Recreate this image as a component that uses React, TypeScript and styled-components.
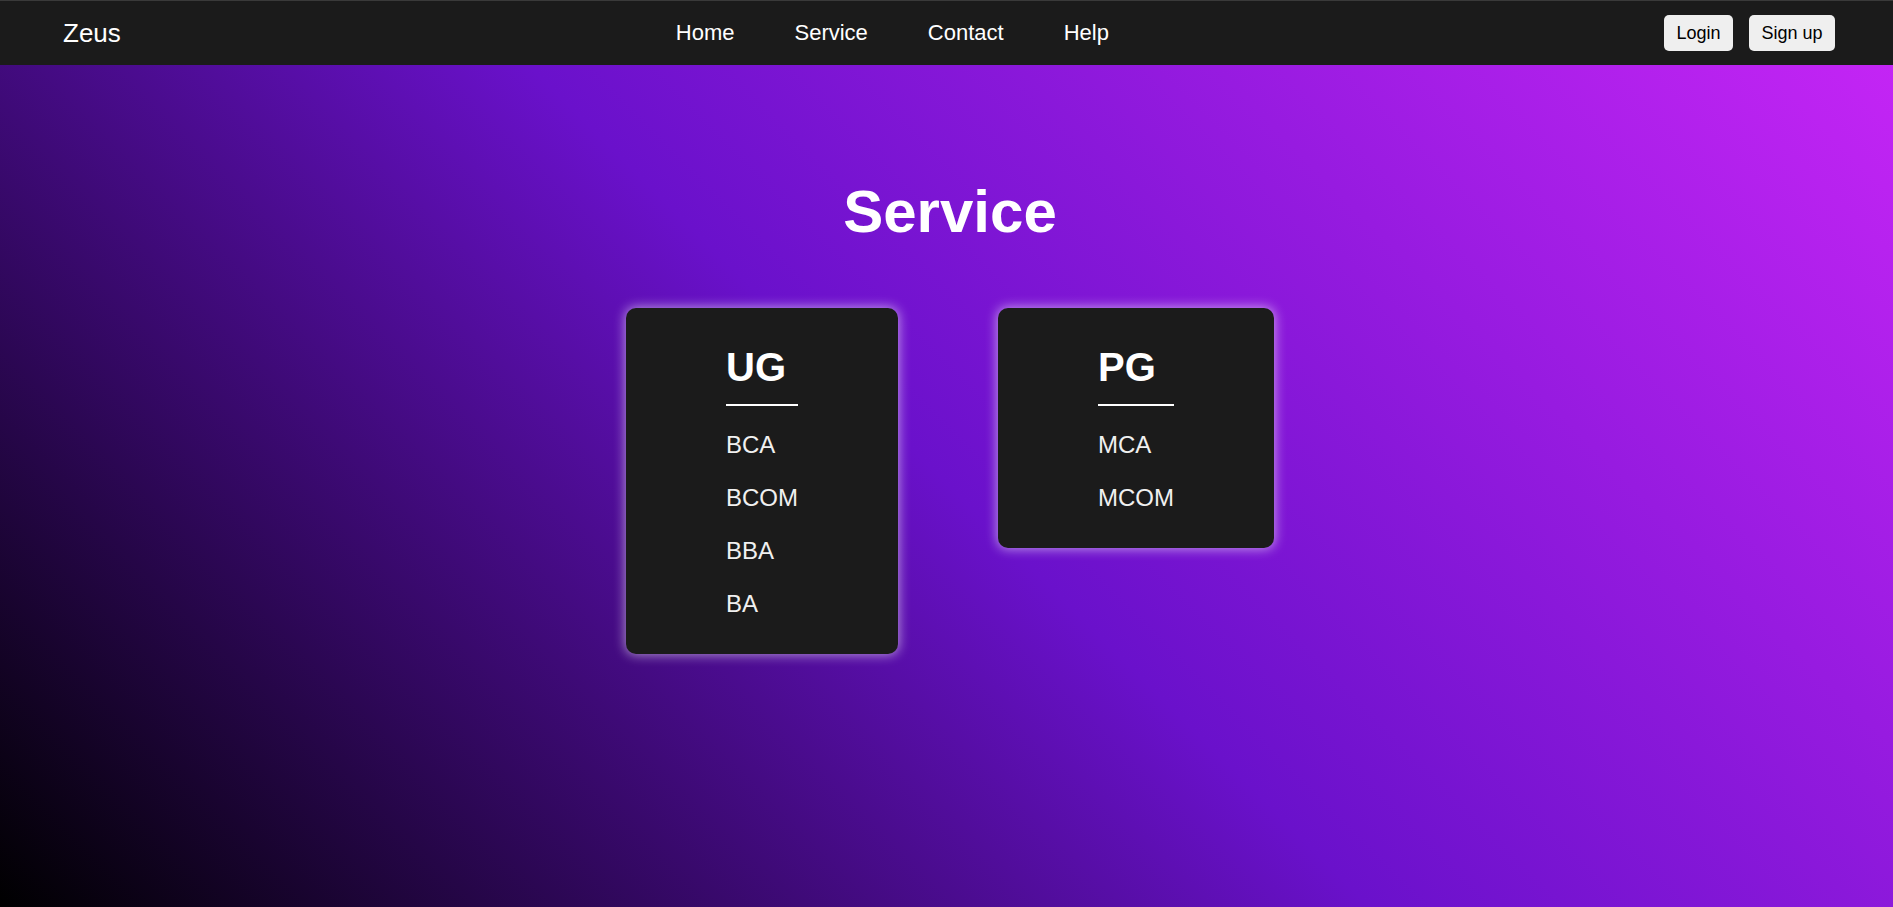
import React from "react";
import styled, { createGlobalStyle } from "styled-components";

const GlobalStyle = createGlobalStyle`
  html, body {
    margin: 0;
    padding: 0;
    overflow: hidden;
    background: #000;
  }
  body {
    font-family: "Liberation Sans", Arial, Helvetica, sans-serif;
  }
  * { box-sizing: border-box; }
`;

const Page = styled.div`
  width: 1900px;
  min-height: 100vh;
  display: flex;
  flex-direction: column;
`;

const NavBar = styled.header`
  height: 65px;
  border-top: 1px solid #3a3a3a;
  background: #1b1b1b;
  display: flex;
  align-items: center;
  justify-content: space-between;
  padding: 0 65px 0 63px;
`;

const Logo = styled.div`
  color: #ffffff;
  font-size: 26px;
`;

const NavLinks = styled.ul`
  display: flex;
  gap: 60px;
  list-style: none;
  margin: 0;
  padding: 0;
`;

const NavLink = styled.li`
  color: #ffffff;
  font-size: 22px;
`;

const AuthGroup = styled.div`
  display: flex;
  gap: 16px;
`;

const AuthButton = styled.button`
  height: 36px;
  padding: 0 12.5px;
  border: none;
  border-radius: 5px;
  background: #efefef;
  color: #000;
  font-family: inherit;
  font-size: 18px;
`;

const Hero = styled.main`
  flex: 1;
  background: linear-gradient(45deg, #000000, #6a11cb, #c425f5);
  display: flex;
  flex-direction: column;
  align-items: center;
  padding-top: 112px;
`;

const Title = styled.h1`
  margin: 0 0 62px;
  color: #ffffff;
  font-size: 60px;
  font-weight: 700;
  line-height: normal;
`;

const CardRow = styled.div`
  display: flex;
  align-items: flex-start;
  gap: 100px;
`;

const Card = styled.section`
  background: #1b1b1b;
  border-radius: 10px;
  padding: 37px 100px 36px;
  box-shadow: 0 0 12px 1px rgba(255, 255, 255, 0.55);
`;

const CardTitle = styled.h2`
  margin: 0 0 25px;
  padding-bottom: 14px;
  border-bottom: 2px solid #ffffff;
  color: #ffffff;
  font-size: 40px;
  font-weight: 700;
  line-height: 45px;
`;

const CourseList = styled.ul`
  list-style: none;
  margin: 0;
  padding: 0;
  display: flex;
  flex-direction: column;
  gap: 25px;
`;

const Course = styled.li`
  color: #f0f0f0;
  font-size: 24px;
  line-height: 28px;
`;

const programs = [
  { title: "UG", courses: ["BCA", "BCOM", "BBA", "BA"] },
  { title: "PG", courses: ["MCA", "MCOM"] },
];

export default function App() {
  return (
    <>
      <GlobalStyle />
      <Page>
        <NavBar>
          <Logo>Zeus</Logo>
          <NavLinks>
            <NavLink>Home</NavLink>
            <NavLink>Service</NavLink>
            <NavLink>Contact</NavLink>
            <NavLink>Help</NavLink>
          </NavLinks>
          <AuthGroup>
            <AuthButton>Login</AuthButton>
            <AuthButton>Sign up</AuthButton>
          </AuthGroup>
        </NavBar>
        <Hero>
          <Title>Service</Title>
          <CardRow>
            {programs.map((p) => (
              <Card key={p.title}>
                <CardTitle>{p.title}</CardTitle>
                <CourseList>
                  {p.courses.map((c) => (
                    <Course key={c}>{c}</Course>
                  ))}
                </CourseList>
              </Card>
            ))}
          </CardRow>
        </Hero>
      </Page>
    </>
  );
}
